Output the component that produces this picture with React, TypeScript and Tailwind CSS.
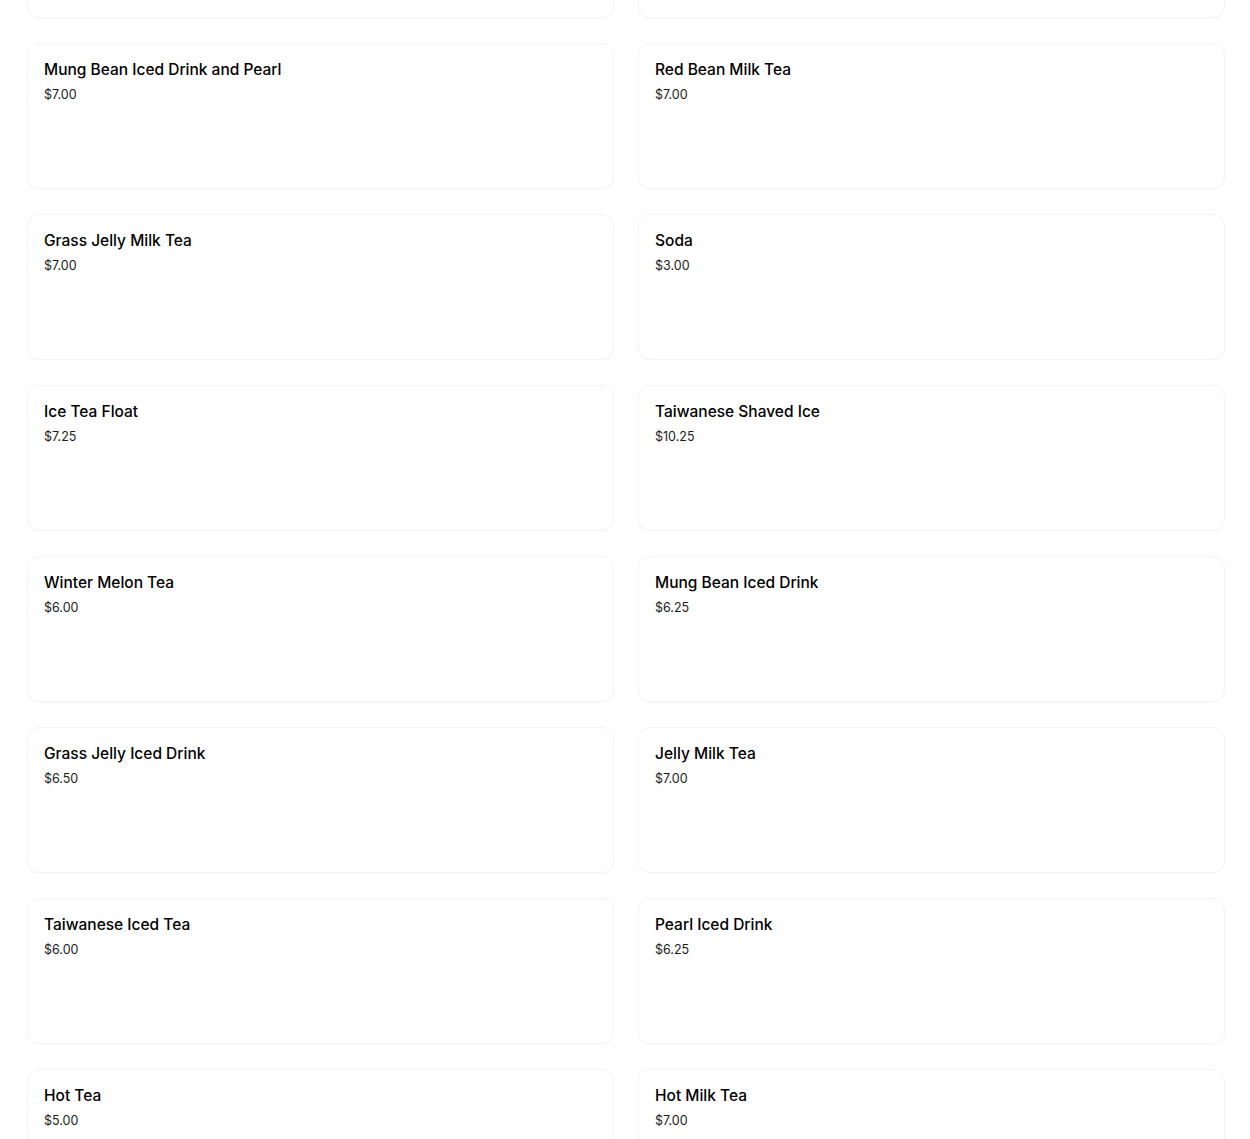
const items: { name: string; price: string }[] = [
  { name: "", price: "" },
  { name: "", price: "" },
  { name: "Mung Bean Iced Drink and Pearl", price: "$7.00" },
  { name: "Red Bean Milk Tea", price: "$7.00" },
  { name: "Grass Jelly Milk Tea", price: "$7.00" },
  { name: "Soda", price: "$3.00" },
  { name: "Ice Tea Float", price: "$7.25" },
  { name: "Taiwanese Shaved Ice", price: "$10.25" },
  { name: "Winter Melon Tea", price: "$6.00" },
  { name: "Mung Bean Iced Drink", price: "$6.25" },
  { name: "Grass Jelly Iced Drink", price: "$6.50" },
  { name: "Jelly Milk Tea", price: "$7.00" },
  { name: "Taiwanese Iced Tea", price: "$6.00" },
  { name: "Pearl Iced Drink", price: "$6.25" },
  { name: "Hot Tea", price: "$5.00" },
  { name: "Hot Milk Tea", price: "$7.00" },
];

function MenuCard({ name, price }: { name: string; price: string }) {
  return (
    <button className="flex h-[146px] flex-col items-start rounded-xl border border-[#f4f4f4] bg-white px-4 pt-4 text-left shadow-[0_1px_2px_rgba(0,0,0,0.025)]">
      {name && <span className="text-[15.5px] font-medium leading-5 text-black">{name}</span>}
      {price && <span className="mt-[5px] text-[12.5px] leading-5 text-[#1a1a1a]">{price}</span>}
    </button>
  );
}

export default function App() {
  return (
    <div
      className="min-h-screen overflow-hidden bg-white"
      style={{ fontFamily: "Inter, 'Noto Sans', sans-serif" }}
    >
      <div className="-mt-[128px] grid grid-cols-2 gap-x-[24px] gap-y-[25px] pl-[27px] pr-[25px]">
        {items.map((item, i) => (
          <MenuCard key={i} name={item.name} price={item.price} />
        ))}
      </div>
    </div>
  );
}
